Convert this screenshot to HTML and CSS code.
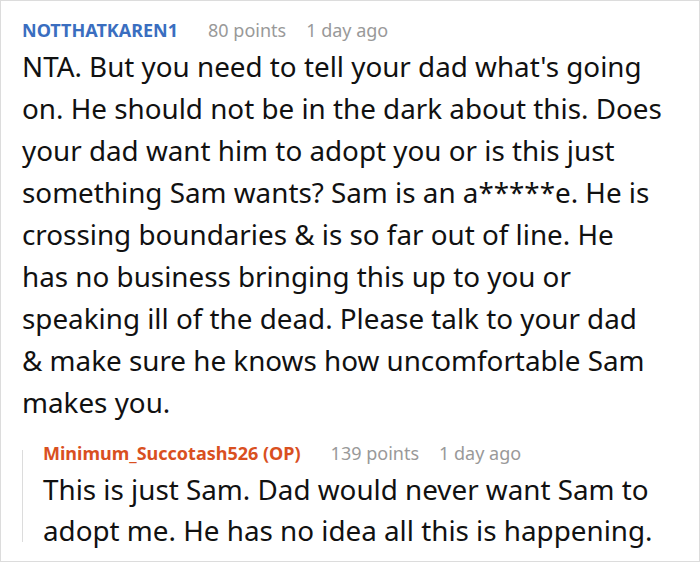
FILE: index.html
```html
<!DOCTYPE html>
<html>
<head>
<meta charset="utf-8">
<link rel="stylesheet" href="styles.css">
</head>
<body>
<div class="card">
  <div class="comment">
    <div class="meta">
      <span class="author">NOTTHATKAREN1</span>
      <span class="points">80 points</span>
      <span class="time">1 day ago</span>
    </div>
    <p class="text">NTA. But you need to tell your dad what's going on. He should not be in the dark about this. Does your dad want him to adopt you or is this just something Sam wants? Sam is an a*****e. He is crossing boundaries &amp; is so far out of line. He has no business bringing this up to you or speaking ill of the dead. Please talk to your dad &amp; make sure he knows how uncomfortable Sam makes you.</p>
    <div class="reply">
      <div class="meta">
        <span class="author op">Minimum_Succotash526 (OP)</span>
        <span class="points">139 points</span>
        <span class="time">1 day ago</span>
      </div>
      <p class="text reply-text">This is just Sam. Dad would never want Sam to adopt me. He has no idea all this is happening.</p>
    </div>
  </div>
</div>
</body>
</html>
```

FILE: styles.css
```css
html, body {
  margin: 0;
  padding: 0;
  background: #fff;
}
.card {
  width: 700px;
  height: 562px;
  box-sizing: border-box;
  border: 1px solid #dcdcdc;
  font-family: "Noto Sans", "Open Sans", sans-serif;
  overflow: hidden;
}
.comment {
  padding: 15px 35px 0 21px;
}
.meta {
  display: flex;
  align-items: baseline;
  font-size: 18px;
  line-height: 29px;
}
.author {
  font-weight: 700;
  color: #3a6ec0;
}
.author.op {
  color: #d9501f;
}
.points {
  color: #999;
  margin-left: 30px;
}
.time {
  color: #999;
  margin-left: 20px;
}
.text {
  margin: 0;
  font-size: 27.8px;
  line-height: 42px;
  color: #111;
}
.reply-text {
  margin-top: 1px;
  line-height: 41px;
}
.reply {
  position: relative;
  margin-top: 16px;
  padding-left: 21px;
}
.reply::before {
  content: "";
  position: absolute;
  left: 0;
  top: 11px;
  bottom: 9px;
  border-left: 1px solid #dcdcdc;
}
```
